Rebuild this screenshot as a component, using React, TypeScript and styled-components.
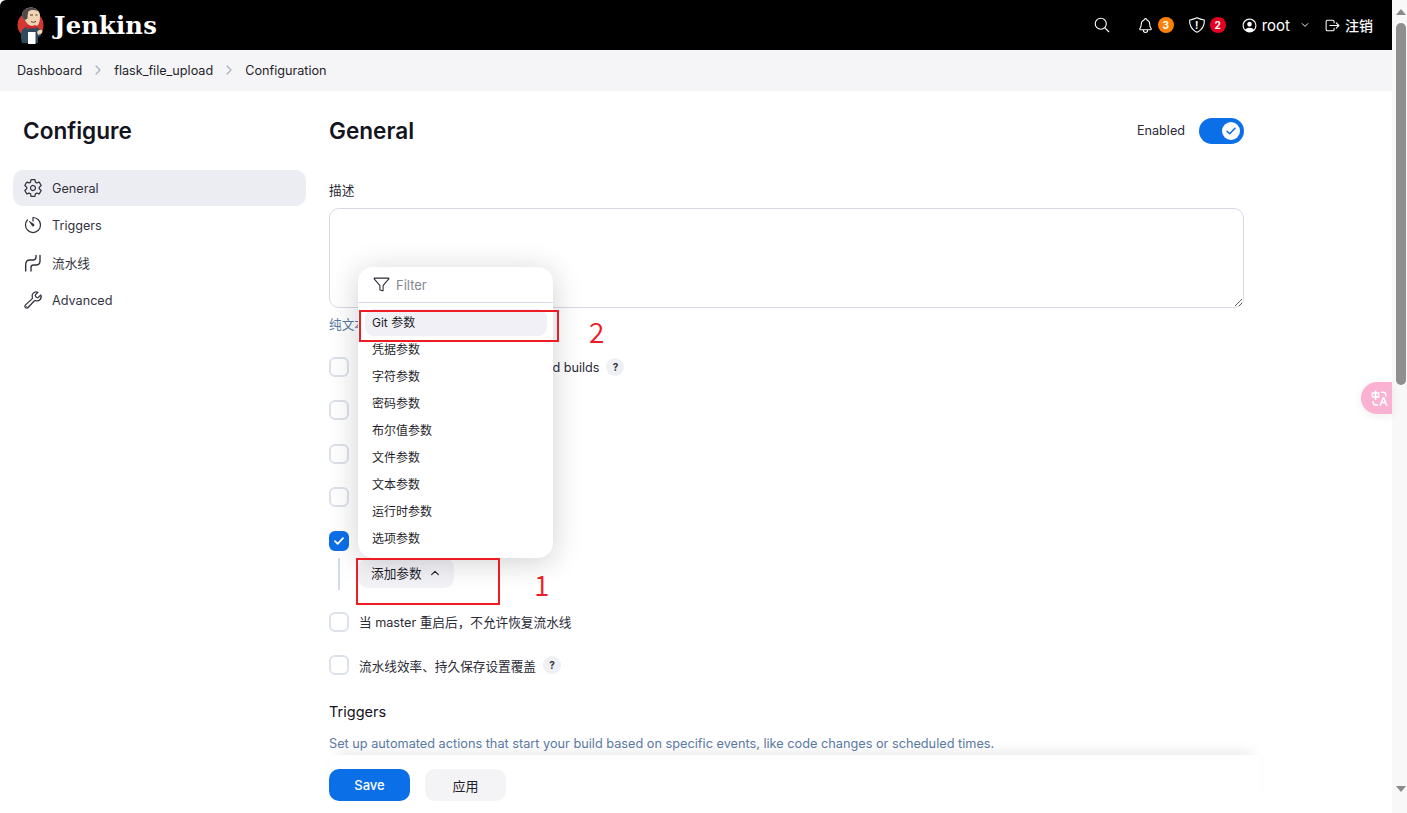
import { createGlobalStyle, styled } from "styled-components";
import {
  IoBuildOutline,
  IoChevronDown,
  IoChevronForward,
  IoChevronUp,
  IoFunnelOutline,
  IoLogOutOutline,
  IoNotificationsOutline,
  IoPersonCircleOutline,
  IoSearchOutline,
  IoSettingsOutline,
  IoShieldOutline,
  IoTimerOutline,
} from "react-icons/io5";
import { RiTranslate } from "react-icons/ri";

const PARAM_TYPES = [
  "Git 参数",
  "凭据参数",
  "字符参数",
  "密码参数",
  "布尔值参数",
  "文件参数",
  "文本参数",
  "运行时参数",
  "选项参数",
];

const GlobalStyle = createGlobalStyle`
  html, body {
    margin: 0;
    height: 100%;
    overflow: hidden;
    background: #fff;
  }
  body {
    font-family: Inter, "Noto Sans CJK SC", sans-serif;
    font-size: 12.65px;
    color: #14141f;
  }
  * {
    box-sizing: border-box;
  }
`;

function JenkinsLogo() {
  return (
    <svg width="28" height="37" viewBox="0 0 28 37" aria-hidden="true">
      <circle cx="13.500" cy="18" r="13" fill="#d33833" />
      <path d="M5 36c-1.500-5-1.500-10 0-13 2-2 5-4 7-4.500l6 .5c2 1 4.500 2.500 5 4.500l1 5-3 2v5.500z" fill="#2f4a5c" />
      <path d="M5 9C5 4 9 .5 13.500.5S22.500 3 23 8c.3 3.500-.5 7.500-2 10-2 1.500-6.500 1.500-9 0-2.500-1.500-3-3.500-4-5-1.500-1-3-2-3-4z" fill="#efd3b3" />
      <path d="M5 9C5 4 9 .5 13.500.5c3.500 0 6.500 1.500 8 4-3.500-1.800-7.500-1.800-10-.2-.7 2-1 4.500-1 7.200l-2.500 1.500C6.500 12 5 11 5 9z" fill="#4e4a49" />
      <path d="M10 17.500l4 2 4.500-1.800.5 3.800-4.800-.6-4.700 1.600z" fill="#d8242a" />
      <path d="M11 25h7.500v12H11z" fill="#fff" />
      <path d="M20 25c1-2 3-2.500 5-2 1 1 .5 3-1 4l-3 1z" fill="#efd3b3" />
      <path d="M13 8h3M18.500 8h2M14 14.500c1.500 1 4 1 5-.3" stroke="#5b3a2a" strokeWidth="1" fill="none" />
    </svg>
  );
}

function PipelineIcon() {
  return (
    <svg width="20" height="20" viewBox="0 0 20 20" fill="none" stroke="currentColor" strokeWidth="1.400" strokeLinecap="round" aria-hidden="true">
      <path d="M2.700 18V12Q2.700 7 6.500 7H10Q13 7 13 4V2.500" />
      <path d="M8 18V14.500Q8 12 10.500 12H13Q17 12 17 8V2.500" />
    </svg>
  );
}

function OptionRow({ label, help, checked }: { label?: string; help?: boolean; checked?: boolean }) {
  return (
    <Row>
      <CheckBox $checked={checked}>
        {checked && (
          <svg width="10" height="8" viewBox="0 0 10 8" fill="none" stroke="#fff" strokeWidth="1.800" strokeLinecap="round" strokeLinejoin="round" aria-hidden="true">
            <path d="M1 4.200 3.700 6.800 9 1.200" />
          </svg>
        )}
      </CheckBox>
      {label && <RowLabel>{label}</RowLabel>}
      {help && <HelpDot>?</HelpDot>}
    </Row>
  );
}

export default function App() {
  return (
    <>
      <GlobalStyle />
      <Window>
        <Page>
          <Header>
            <Brand>
              <JenkinsLogo />
              <BrandName>Jenkins</BrandName>
            </Brand>
            <HeaderActions>
              <HeaderIcon $gap={26}>
                <IoSearchOutline size={18} />
              </HeaderIcon>
              <HeaderIcon $gap={14}>
                <IoNotificationsOutline size={17} />
                <Count $bg="#fd8107">3</Count>
              </HeaderIcon>
              <HeaderIcon $gap={15}>
                <ShieldWrap>
                  <IoShieldOutline size={18} />
                  <ShieldMark>!</ShieldMark>
                </ShieldWrap>
                <Count $bg="#e6001f">2</Count>
              </HeaderIcon>
              <HeaderIcon $gap={14}>
                <IoPersonCircleOutline size={17} />
                <UserName>root</UserName>
                <Caret>
                  <IoChevronDown size={10} />
                </Caret>
              </HeaderIcon>
              <HeaderIcon $gap={0}>
                <IoLogOutOutline size={17} />
                <LogoutText>注销</LogoutText>
              </HeaderIcon>
            </HeaderActions>
          </Header>

          <Breadcrumbs>
            <Crumb>Dashboard</Crumb>
            <CrumbArrow>
              <IoChevronForward size={14} />
            </CrumbArrow>
            <Crumb>flask_file_upload</Crumb>
            <CrumbArrow>
              <IoChevronForward size={14} />
            </CrumbArrow>
            <Crumb>Configuration</Crumb>
          </Breadcrumbs>

          <Body>
            <Sidebar>
              <SideTitle>Configure</SideTitle>
              <SideItem $active>
                <IoSettingsOutline size={20} />
                General
              </SideItem>
              <SideItem>
                <IoTimerOutline size={20} />
                Triggers
              </SideItem>
              <SideItem>
                <PipelineIcon />
                流水线
              </SideItem>
              <SideItem>
                <IoBuildOutline size={20} />
                Advanced
              </SideItem>
            </Sidebar>

            <Main>
              <Content>
                <TitleRow>
                  <PageTitle>General</PageTitle>
                  <EnabledLabel>Enabled</EnabledLabel>
                  <Switch>
                    <SwitchKnob>
                      <svg width="10" height="8" viewBox="0 0 10 8" fill="none" stroke="#0b6fe8" strokeWidth="1.500" strokeLinecap="round" strokeLinejoin="round" aria-hidden="true">
                        <path d="M1 4.200 3.700 6.800 9 1.200" />
                      </svg>
                    </SwitchKnob>
                  </Switch>
                </TitleRow>

                <FieldLabel>描述</FieldLabel>
                <Description />
                <PreviewLink>纯文本 预览</PreviewLink>

                <Options>
                  <OptionRow label="Do not allow concurrent triggered builds" help />
                  <OptionRow />
                  <OptionRow />
                  <OptionRow />
                  <OptionRow checked />
                </Options>

                <ParamBlock>
                  <AddParam>
                    添加参数
                    <IoChevronUp size={12} />
                  </AddParam>
                </ParamBlock>

                <LowerOptions>
                  <OptionRow label="当 master 重启后，不允许恢复流水线" />
                  <OptionRow label="流水线效率、持久保存设置覆盖" help />
                </LowerOptions>

                <SectionTitle>Triggers</SectionTitle>
                <SectionHint>
                  Set up automated actions that start your build based on specific events, like code changes or scheduled times.
                </SectionHint>
              </Content>

              <Footer>
                <SaveButton>Save</SaveButton>
                <ApplyButton>应用</ApplyButton>
              </Footer>
            </Main>
          </Body>

          <Dropdown>
            <FilterBar>
              <IoFunnelOutline size={17} />
              Filter
            </FilterBar>
            <ItemList>
              {PARAM_TYPES.map((name, i) => (
                <MenuItem key={name} $active={i === 0}>
                  {name}
                </MenuItem>
              ))}
            </ItemList>
          </Dropdown>

          <MarkOne />
          <MarkTwo />
          <NumberOne>1</NumberOne>
          <NumberTwo>2</NumberTwo>

          <TranslateTab>
            <RiTranslate size={19} />
          </TranslateTab>
        </Page>

        <ScrollTrack>
          <ScrollArrow $up />
          <ScrollThumb />
          <ScrollArrow />
        </ScrollTrack>
      </Window>
    </>
  );
}

const Window = styled.div`
  display: flex;
  width: 1407px;
  height: 813px;
  overflow: hidden;
`;

const Page = styled.div`
  position: relative;
  flex: 1;
  min-width: 0;
  display: flex;
  flex-direction: column;
`;

const Header = styled.header`
  height: 50px;
  flex: none;
  display: flex;
  align-items: center;
  justify-content: space-between;
  padding: 0 19px 0 17px;
  background: #000;
  color: #fff;
  border-top-left-radius: 6px;
`;

const Brand = styled.div`
  display: flex;
  align-items: center;
  gap: 9px;
`;

const BrandName = styled.span`
  font-family: "DejaVu Serif", "Liberation Serif", serif;
  font-size: 24.200px;
  font-weight: 700;
  letter-spacing: 0.2px;
`;

const HeaderActions = styled.div`
  display: flex;
  align-items: center;
`;

const HeaderIcon = styled.div<{ $gap: number }>`
  display: flex;
  align-items: center;
  gap: 4px;
  margin-right: ${(p) => p.$gap}px;
`;

const ShieldWrap = styled.span`
  position: relative;
  display: flex;
`;

const ShieldMark = styled.span`
  position: absolute;
  inset: 0;
  text-align: center;
  font-size: 10px;
  font-weight: 700;
  line-height: 18px;
`;

const Count = styled.span<{ $bg: string }>`
  width: 16px;
  height: 16px;
  border-radius: 50%;
  background: ${(p) => p.$bg};
  color: #fff;
  font-size: 10px;
  font-weight: 700;
  line-height: 16px;
  text-align: center;
`;

const UserName = styled.span`
  font-size: 15px;
  font-weight: 400;
`;

const LogoutText = styled.span`
  font-size: 14px;
  font-weight: 500;
`;

const Caret = styled.span`
  display: flex;
  margin-left: 6px;
`;

const Breadcrumbs = styled.nav`
  height: 41px;
  flex: none;
  display: flex;
  align-items: center;
  padding: 0 0 1px 17px;
  background: #f5f5f7;
`;

const Crumb = styled.span`
  font-size: 12.650px;
  color: #1f1f2b;
`;

const CrumbArrow = styled.span`
  display: flex;
  margin: 0 9px;
  color: #a6b3c9;
`;

const Body = styled.div`
  flex: 1;
  min-height: 0;
  display: flex;
`;

const Sidebar = styled.aside`
  width: 329px;
  flex: none;
  padding: 25px 23px 0 13px;
`;

const SideTitle = styled.h2`
  margin: 0 0 25px 10px;
  font-size: 22.600px;
  line-height: 29px;
  font-weight: 600;
`;

const SideItem = styled.div<{ $active?: boolean }>`
  height: 36px;
  margin-bottom: 1.400px;
  display: flex;
  align-items: center;
  gap: 9px;
  padding-left: 10px;
  border-radius: 10px;
  background: ${(p) => (p.$active ? "#ecedf3" : "transparent")};
  color: #33333f;
`;

const Main = styled.main`
  width: 931px;
  flex: none;
  display: flex;
  flex-direction: column;
`;

const Content = styled.div`
  flex: 1;
  min-height: 0;
  overflow: hidden;
  padding: 25px 16px 0 0;
`;

const TitleRow = styled.div`
  display: flex;
  align-items: center;
  height: 29px;
  margin-bottom: 37px;
`;

const PageTitle = styled.h1`
  flex: 1;
  margin: 0;
  font-size: 22.600px;
  font-weight: 600;
`;

const EnabledLabel = styled.span`
  margin: 0 14px 1px 0;
  color: #2a2a36;
`;

const Switch = styled.div`
  width: 45px;
  height: 26px;
  padding: 4px 4px 4px 23px;
  border-radius: 13px;
  background: #0b6fe8;
`;

const SwitchKnob = styled.div`
  width: 18px;
  height: 18px;
  display: flex;
  align-items: center;
  justify-content: center;
  border-radius: 50%;
  background: #fff;
`;

const FieldLabel = styled.div`
  height: 18px;
  margin-bottom: 8px;
  line-height: 18px;
  color: #2a2a36;
`;

const Description = styled.textarea`
  display: block;
  width: 100%;
  height: 100px;
  resize: vertical;
  border: 1px solid #d5dae6;
  border-radius: 10px;
  background: #fff;
  outline: none;
`;

const PreviewLink = styled.div`
  margin-top: 8px;
  height: 17px;
  line-height: 17px;
  color: #5c7aa5;
`;

const Options = styled.div`
  margin-top: 24px;
  display: flex;
  flex-direction: column;
  gap: 23.400px;
`;

const Row = styled.div`
  display: flex;
  align-items: center;
  gap: 10px;
  height: 20px;
`;

const CheckBox = styled.span<{ $checked?: boolean }>`
  width: 20px;
  height: 20px;
  flex: none;
  display: flex;
  align-items: center;
  justify-content: center;
  border-radius: 6px;
  border: 2px solid ${(p) => (p.$checked ? "#0b6fe8" : "#dce1eb")};
  background: ${(p) => (p.$checked ? "#0b6fe8" : "#fff")};
`;

const RowLabel = styled.span`
  color: #2a2a36;
`;

const HelpDot = styled.span`
  width: 18px;
  height: 18px;
  margin-left: -3px;
  flex: none;
  border-radius: 50%;
  background: #eef0f4;
  color: #33333f;
  font-size: 10px;
  font-weight: 700;
  line-height: 18px;
  text-align: center;
`;

const ParamBlock = styled.div`
  margin: 7px 0 22px 9px;
  padding-left: 18px;
  border-left: 2px solid #d6dbe8;
  height: 32px;
`;

const AddParam = styled.div`
  display: inline-flex;
  align-items: center;
  gap: 7px;
  height: 30px;
  padding: 0 13px 0 13px;
  border-radius: 10px;
  background: #f3f3f7;
  color: #1f1f2b;
`;

const LowerOptions = styled.div`
  display: flex;
  flex-direction: column;
  gap: 23.500px;
`;

const SectionTitle = styled.h3`
  margin: 27px 0 0;
  height: 20px;
  font-size: 14.500px;
  line-height: 20px;
  font-weight: 400;
  color: #14141f;
`;

const SectionHint = styled.p`
  margin: 14px 0 0;
  font-size: 12.730px;
  line-height: 16px;
  color: #5c7aa5;
  white-space: nowrap;
`;

const Footer = styled.footer`
  height: 58px;
  flex: none;
  display: flex;
  gap: 15px;
  padding-top: 14px;
  background: #fff;
  box-shadow: 0 -10px 14px -8px rgba(20, 20, 31, 0.1);
`;

const SaveButton = styled.button`
  width: 81px;
  height: 32px;
  border: none;
  border-radius: 10px;
  background: #0b6fe8;
  color: #fff;
  font: 500 13px Inter, "Noto Sans CJK SC", sans-serif;
`;

const ApplyButton = styled(SaveButton)`
  background: #f4f4f7;
  color: #1f1f2b;
  font-weight: 400;
`;

const Dropdown = styled.div`
  position: absolute;
  top: 267px;
  left: 358px;
  width: 195px;
  height: 291px;
  border-radius: 15px;
  background: #fff;
  box-shadow: 0 4px 30px rgba(20, 20, 31, 0.2);
`;

const FilterBar = styled.div`
  height: 36px;
  display: flex;
  align-items: center;
  gap: 6px;
  padding-left: 15px;
  border-bottom: 1px solid #d5dae6;
  font-size: 13px;
  color: #85858f;

  svg {
    color: #2a2a36;
  }
`;

const ItemList = styled.div`
  padding: 6px 6px 0 7px;
`;

const MenuItem = styled.div<{ $active?: boolean }>`
  height: 27px;
  padding-left: 7px;
  border-radius: 9px;
  background: ${(p) => (p.$active ? "#f0f0f6" : "transparent")};
  font-size: 12px;
  line-height: 27px;
  color: #1f1f2b;
`;

const MarkOne = styled.div`
  position: absolute;
  left: 356px;
  top: 558px;
  width: 144px;
  height: 47px;
  border: 2px solid #ee1c25;
`;

const MarkTwo = styled.div`
  position: absolute;
  left: 359px;
  top: 310px;
  width: 200px;
  height: 32px;
  border: 2px solid #ee1c25;
`;

const NumberOne = styled.span`
  position: absolute;
  left: 534px;
  top: 566px;
  font-family: "Noto Sans CJK SC", sans-serif;
  font-size: 28px;
  line-height: 36px;
  font-weight: 350;
  color: #ee1c25;
`;

const NumberTwo = styled(NumberOne)`
  left: 589px;
  top: 313px;
`;

const TranslateTab = styled.div`
  position: absolute;
  left: 1361px;
  top: 382px;
  width: 31px;
  height: 32px;
  display: flex;
  align-items: center;
  padding-left: 9px;
  border-radius: 16px 0 0 16px;
  background: #fbb1d2;
  color: #fff;
  box-shadow: 0 2px 8px rgba(20, 20, 31, 0.08);
`;

const ScrollTrack = styled.div`
  width: 15px;
  flex: none;
  display: flex;
  flex-direction: column;
  align-items: center;
  padding-left: 3px;
  background: #f8f8f8;
`;

const ScrollArrow = styled.span<{ $up?: boolean }>`
  width: 0;
  height: 0;
  flex: none;
  margin: ${(p) => (p.$up ? "9px 0 8px" : "0 0 9px")};
  border-left: 5px solid transparent;
  border-right: 5px solid transparent;
  ${(p) => (p.$up ? "border-bottom: 6px solid #8a8a8a;" : "border-top: 6px solid #8a8a8a;")}
`;

const ScrollThumb = styled.div`
  width: 10px;
  height: 362px;
  margin-bottom: 401px;
  border-radius: 5px;
  background: #8f8f8f;
`;
